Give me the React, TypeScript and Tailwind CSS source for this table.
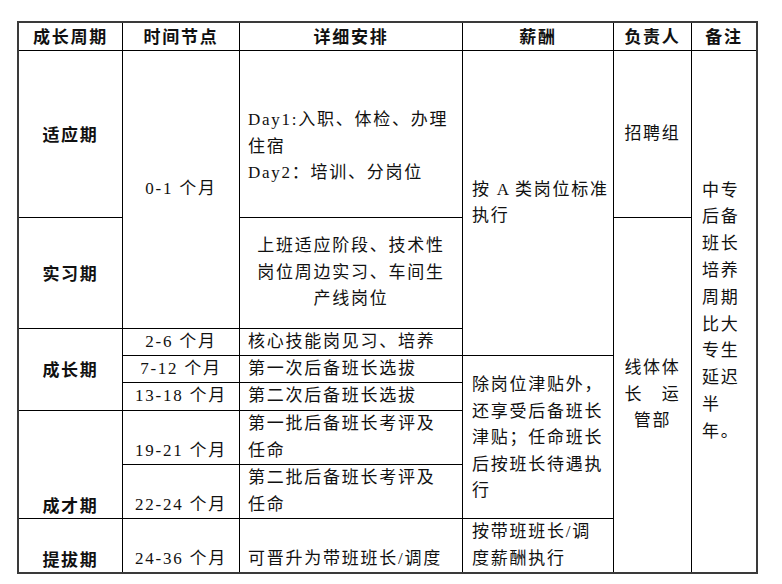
import type { ReactNode } from 'react';

const base = "bg-white text-[17px] leading-[26.5px] tracking-[1.75px] text-[#111]";
const bold = "font-bold tracking-[1.5px] font-['Noto_Sans_CJK_SC',sans-serif]";

function Cell({ className, children }: { className: string; children?: ReactNode }) {
  return <div className={`${base} ${className}`}>{children}</div>;
}

function Lines({ items }: { items: string[] }) {
  return (
    <>
      {items.map((t, i) => (
        <div key={i} className="whitespace-nowrap">
          {t}
        </div>
      ))}
    </>
  );
}

const center = "flex flex-col items-center justify-center";
const bottom = "flex flex-col items-center justify-end";

export default function App() {
  return (
    <div className="min-h-screen bg-white pl-[17px] pt-[21px] font-['Liberation_Serif','Noto_Sans_CJK_SC',serif]">
      <div className="grid w-fit grid-cols-[103px_116px_222px_150px_77px_64px] grid-rows-[27px_166px_110px_26px_26px_27px_53px_53px_53px] gap-px border-2 border-[#3a3a3a] bg-black">
        {/* header */}
        <Cell className={`${center} ${bold}`}>成长周期</Cell>
        <Cell className={`${center} ${bold}`}>时间节点</Cell>
        <Cell className={`${center} ${bold}`}>详细安排</Cell>
        <Cell className={`${center} ${bold}`}>薪酬</Cell>
        <Cell className={`${center} ${bold}`}>负责人</Cell>
        <Cell className={`${center} ${bold}`}>备注</Cell>

        {/* 成长周期 column */}
        <Cell className={`col-start-1 row-start-2 ${center} ${bold}`}>适应期</Cell>
        <Cell className={`col-start-1 row-start-3 ${center} ${bold}`}>实习期</Cell>
        <Cell className={`col-start-1 row-start-4 row-span-3 ${center} ${bold}`}>成长期</Cell>
        <Cell className={`col-start-1 row-start-7 row-span-2 ${bottom} leading-[24px] ${bold}`}>成才期</Cell>
        <Cell className={`col-start-1 row-start-9 ${bottom} leading-[23px] ${bold}`}>提拔期</Cell>

        {/* 时间节点 column */}
        <Cell className={`col-start-2 row-start-2 row-span-2 ${center}`}>0-1 个月</Cell>
        <Cell className={`col-start-2 row-start-4 ${center}`}>2-6 个月</Cell>
        <Cell className={`col-start-2 row-start-5 ${center}`}>7-12 个月</Cell>
        <Cell className={`col-start-2 row-start-6 ${center}`}>13-18 个月</Cell>
        <Cell className={`col-start-2 row-start-7 ${bottom} leading-[23px]`}>19-21 个月</Cell>
        <Cell className={`col-start-2 row-start-8 ${bottom} leading-[24px]`}>22-24 个月</Cell>
        <Cell className={`col-start-2 row-start-9 ${bottom} leading-[23px]`}>24-36 个月</Cell>

        {/* 详细安排 column */}
        <Cell className="col-start-3 row-start-2 flex flex-col justify-center pl-[8px] pt-[26px]">
          <Lines items={['Day1:入职、体检、办理', '住宿', 'Day2：培训、分岗位']} />
        </Cell>
        <Cell className={`col-start-3 row-start-3 ${center} text-center`}>
          <Lines items={['上班适应阶段、技术性', '岗位周边实习、车间生', '产线岗位']} />
        </Cell>
        <Cell className="col-start-3 row-start-4 flex items-center pl-[8px]">核心技能岗见习、培养</Cell>
        <Cell className="col-start-3 row-start-5 flex items-center pl-[8px]">第一次后备班长选拔</Cell>
        <Cell className="col-start-3 row-start-6 flex items-center pl-[8px]">第二次后备班长选拔</Cell>
        <Cell className="col-start-3 row-start-7 pl-[8px]">
          <Lines items={['第一批后备班长考评及', '任命']} />
        </Cell>
        <Cell className="col-start-3 row-start-8 pl-[8px]">
          <Lines items={['第二批后备班长考评及', '任命']} />
        </Cell>
        <Cell className="col-start-3 row-start-9 flex flex-col justify-end pl-[8px] leading-[23px]">
          可晋升为带班班长/调度
        </Cell>

        {/* 薪酬 column */}
        <Cell className="col-start-4 row-start-2 row-span-3 flex flex-col justify-center pl-[9px]">
          <div className="whitespace-nowrap">
            按 <span className="tracking-normal">A</span> 类岗位标准
          </div>
          <div>执行</div>
        </Cell>
        <Cell className="col-start-4 row-start-5 row-span-4 flex flex-col justify-center pl-[9px] pt-[3px]">
          <Lines items={['除岗位津贴外，', '还享受后备班长', '津贴；任命班长', '后按班长待遇执', '行']} />
        </Cell>
        <Cell className="col-start-4 row-start-9 pl-[9px]">
          <Lines items={['按带班班长/调', '度薪酬执行']} />
        </Cell>

        {/* 负责人 column */}
        <Cell className={`col-start-5 row-start-2 ${center}`}>招聘组</Cell>
        <Cell className={`col-start-5 row-start-3 row-span-7 ${center}`}>
          <Lines items={['线体体', '长　运', '管部']} />
        </Cell>

        {/* 备注 column */}
        <Cell className="col-start-6 row-start-2 row-span-8 flex flex-col justify-center pl-[10px] leading-[26.8px]">
          <Lines items={['中专', '后备', '班长', '培养', '周期', '比大', '专生', '延迟', '半', '年。']} />
        </Cell>
      </div>
    </div>
  );
}
